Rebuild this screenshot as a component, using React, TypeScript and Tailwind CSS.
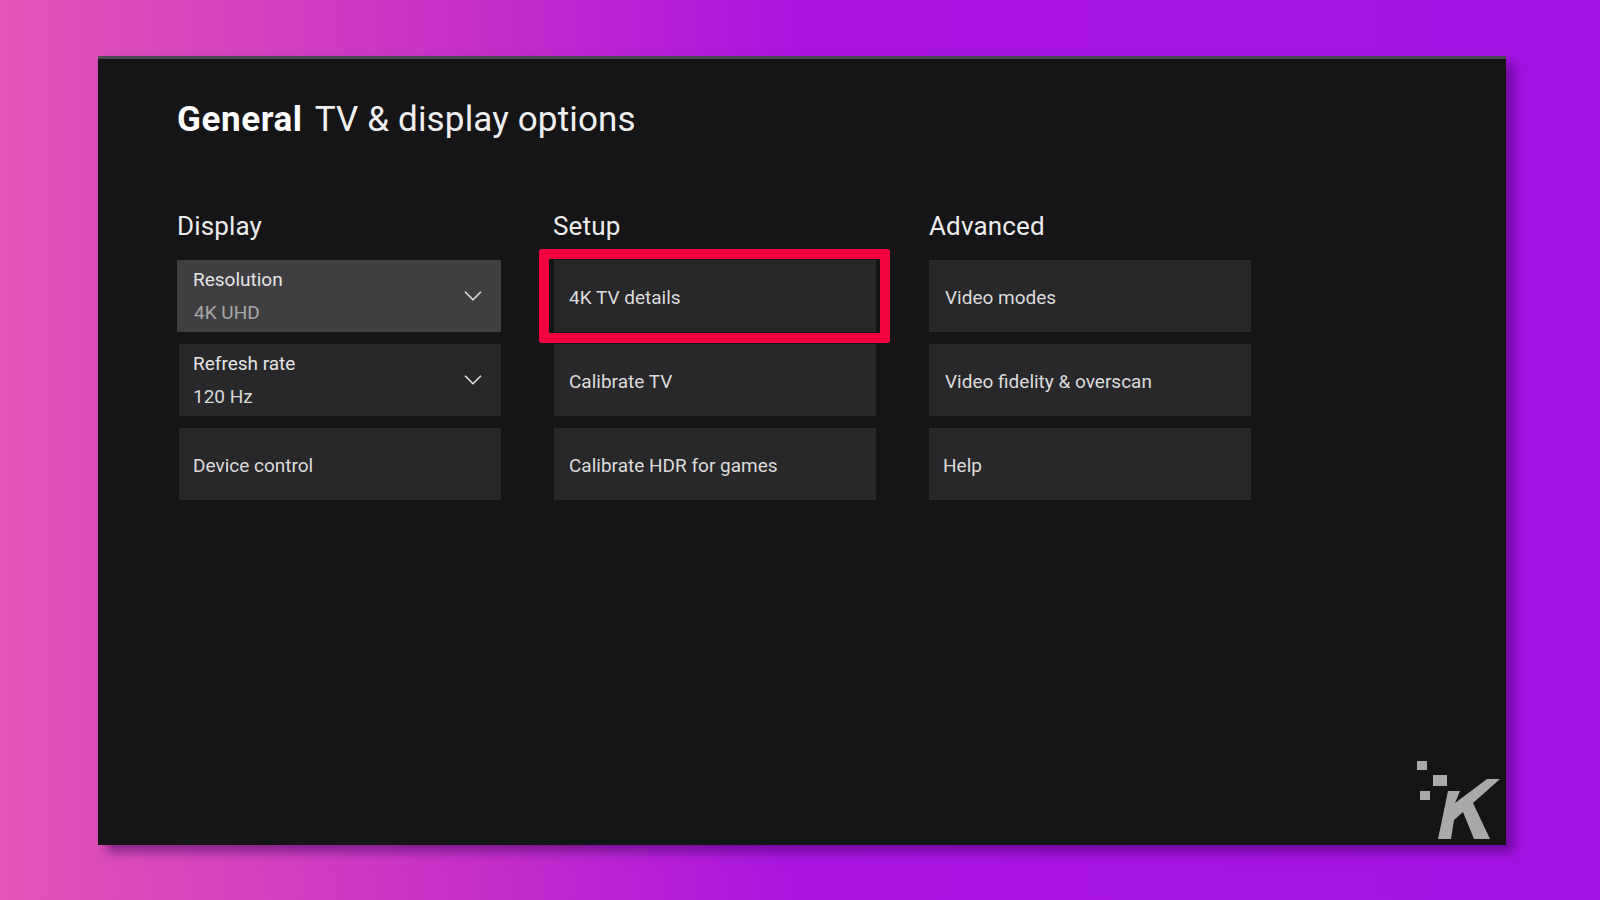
import { ChevronDown } from "lucide-react";

function Card({ label, value, focused, dim, className = "" }: { label: string; value?: string; focused?: boolean; dim?: boolean; className?: string }) {
  return (
    <div className={`h-[72px] flex items-center justify-between pl-4 pr-[13px] ${focused ? "bg-[#3f3e41]" : "bg-[#28272a]"} ${className}`}>
      {value ? (
        <div className="flex flex-col gap-[11px]">
          <span className="text-[19px] leading-[22px] text-[#e4e4e4]">{label}</span>
          <span className={`text-[19px] leading-[22px] ${dim ? "text-[#a8a8a8] ml-px" : "text-[#d8d8d8]"}`}>{value}</span>
        </div>
      ) : (
        <span className="text-[19px] leading-[22px] pt-[3px] text-[#dcdcdc]">{label}</span>
      )}
      {value && <ChevronDown size={30} strokeWidth={1.4} className="text-[#d8d8d8]" />}
    </div>
  );
}

function Column({ title, children }: { title: string; children: React.ReactNode }) {
  return (
    <div className="w-[324px]">
      <h2 className="text-[26px] leading-[32px] tracking-[0.15px] text-[#ececec] mb-[18px]">{title}</h2>
      <div className="flex flex-col gap-3">{children}</div>
    </div>
  );
}

export default function App() {
  return (
    <div
      className="w-[1600px] h-[900px] overflow-hidden pl-[98px] pt-[56px] bg-[linear-gradient(90deg,#e155b5_0%,#c733c8_28%,#a914e0_50%,#a512e4_100%)]"
      style={{ fontFamily: '"Roboto", "Liberation Sans", sans-serif' }}
    >
      <div className="relative w-[1408px] h-[789px] bg-[#151417] border-t-[3px] border-[#4c4a52] shadow-[8px_7px_10px_rgba(60,0,90,0.5)] pl-[79px] pt-[36px]">
        <h1 className="text-[35px] leading-[50px] tracking-[0.15px] text-[#f0f0f0]">
          <span className="font-bold text-white mr-3 tracking-[0.6px]">General</span>
          TV &amp; display options
        </h1>

        <div className="flex gap-[52px] mt-[65px]">
          <Column title="Display">
            <Card label="Resolution" value="4K UHD" focused dim />
            <Card label="Refresh rate" value="120 Hz" className="ml-[2px] pl-[14px]" />
            <Card label="Device control" className="ml-[2px] pl-[14px]" />
          </Column>
          <Column title="Setup">
            <div className="relative ml-px w-[322px]">
              <Card label="4K TV details" className="pl-[15px]" />
              <div className="absolute -left-[15px] -right-[14px] -inset-y-[11px] border-[10px] border-[#f5053f] rounded-[3px]" />
            </div>
            <Card label="Calibrate TV" className="ml-px w-[322px] pl-[15px]" />
            <Card label="Calibrate HDR for games" className="ml-px w-[322px] pl-[15px]" />
          </Column>
          <Column title="Advanced">
            <Card label="Video modes" className="w-[322px]" />
            <Card label="Video fidelity & overscan" className="w-[322px]" />
            <Card label="Help" className="w-[322px] pl-[14px]" />
          </Column>
        </div>

        {/* watermark */}
        <svg viewBox="0 0 90 85" className="absolute right-0 bottom-0 w-[90px] h-[85px]">
          <g fill="#a9a8aa">
            <rect x="1" y="1" width="10" height="9" />
            <rect x="17" y="15" width="14" height="11" />
            <rect x="4" y="31" width="10" height="9" />
            <path d="M32 31 H44 L39 43 L71 19 H84 L57 43 L74 79 H58 L47 52 L38 60 L35 79 H22 Z" />
          </g>
        </svg>
      </div>
    </div>
  );
}
